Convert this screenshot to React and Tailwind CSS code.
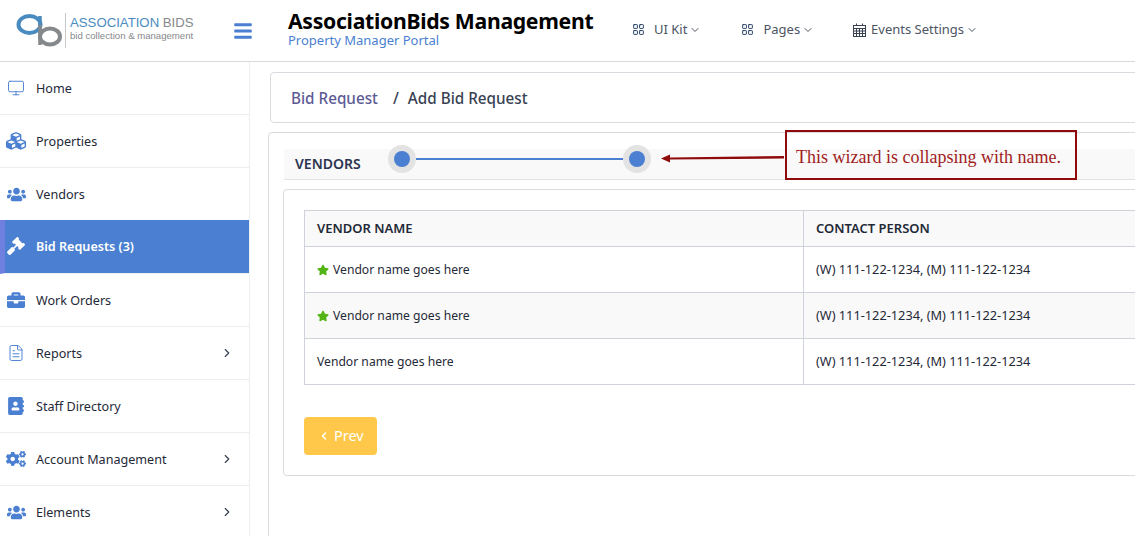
import React from 'react';
import { Monitor, ChevronRight, ChevronDown, ChevronLeft, LayoutGrid, FileText } from 'lucide-react';
import { FaBars, FaCubes, FaUsers, FaGavel, FaBriefcase, FaAddressBook, FaCogs, FaStar } from 'react-icons/fa';

const menu = [
  { label: 'Home', icon: Monitor, thin: true },
  { label: 'Properties', icon: FaCubes, size: 'w-[20px] h-[20px]' },
  { label: 'Vendors', icon: FaUsers, size: 'w-[19px] h-[19px]' },
  { label: 'Bid Requests (3)', icon: FaGavel, active: true },
  { label: 'Work Orders', icon: FaBriefcase },
  { label: 'Reports', icon: FileText, thin: true, arrow: true },
  { label: 'Staff Directory', icon: FaAddressBook },
  { label: 'Account Management', icon: FaCogs, arrow: true, size: 'w-[20px] h-[20px]' },
  { label: 'Elements', icon: FaUsers, arrow: true, size: 'w-[19px] h-[19px]' },
];

const rows = [
  { star: true, bg: 'bg-white' },
  { star: true, bg: 'bg-[#f9f9f9]' },
  { star: false, bg: 'bg-white' },
];

const Logo = () => (
  <div className="flex items-center w-[233px] pl-4 shrink-0">
    <svg width="48" height="34" viewBox="0 0 48 34" className="shrink-0">
      <ellipse cx="13.5" cy="10.5" rx="11" ry="8.5" fill="none" stroke="#4a8bbf" strokeWidth="4" />
      <path d="M24 2 V19" stroke="#4a8bbf" strokeWidth="3.5" />
      <ellipse cx="34" cy="22.5" rx="10" ry="8" fill="none" stroke="#85898c" strokeWidth="4" />
      <path d="M24 11 V31" stroke="#85898c" strokeWidth="3.5" />
    </svg>
    <div className="w-px h-[35px] bg-[#c8c8c8] ml-[1px] mr-1" />
    <div className="font-['Liberation_Sans',sans-serif] whitespace-nowrap -mt-[3px]">
      <div className="text-[13.2px] leading-[14px] text-[#4a8bbf]">ASSOCIATION <span className="text-[#85898c]">BIDS</span></div>
      <div className="text-[9.6px] leading-[12px] text-[#85898c]">bid collection &amp; management</div>
    </div>
  </div>
);

const CalendarIcon = () => (
  <svg width="13" height="14" viewBox="0 0 13 14" className="mr-[5px] text-[#374151]" fill="none" stroke="currentColor" strokeWidth="1">
    <rect x="0.5" y="2.5" width="12" height="11" />
    <path d="M3.5 0.5 V3 M9.5 0.5 V3 M0.5 5.5 H12.5 M0.5 8 H12.5 M0.5 10.5 H12.5 M3.5 5.5 V13.5 M6.5 5.5 V13.5 M9.5 5.5 V13.5" />
  </svg>
);

const NavLink = ({ label, ml, calendar }) => (
  <div className={`flex items-center text-[13px] text-[#4b5563] ${ml}`}>
    {calendar ? <CalendarIcon /> : <LayoutGrid className="w-[13px] h-[13px] text-[#1f3a5f] mr-[9px]" strokeWidth={1.75} />}
    <span>{label}</span>
    <ChevronDown className="w-3 h-3 ml-[2px]" />
  </div>
);

const App = () => {
  return (
    <div className="w-[1135px] h-[536px] overflow-hidden bg-white font-['Noto_Sans',sans-serif] text-[#1f2937]">
      {/* Header */}
      <header className="flex items-center h-[62px] border-b border-[#d9d9d9]">
        <Logo />
        <FaBars className="w-[20px] h-[20px] text-[#4a7fd1] mr-[35px]" />
        <div className="w-[330px] pb-[5px]">
          <div className="text-[21.2px] leading-[24px] font-bold text-black whitespace-nowrap tracking-[-0.3px]">AssociationBids Management</div>
          <div className="text-[13px] leading-[14px] text-[#4a7fd1]">Property Manager Portal</div>
        </div>
        <div className="flex items-center pb-[2px]">
          <NavLink label="UI Kit" ml="ml-[14px]" />
          <NavLink label="Pages" ml="ml-[40px]" />
          <NavLink label="Events Settings" ml="ml-[39px]" calendar />
        </div>
      </header>

      <div className="flex h-[474px]">
        {/* Sidebar */}
        <aside className="w-[250px] shrink-0 border-r border-[#eceef1]">
          {menu.map((item) => (
            <div
              key={item.label}
              className={`flex items-center border-b text-[12.6px] ${item.active ? 'h-[54px] -mt-px pt-[2px] bg-[#4a7fd1] text-white font-semibold border-l-[5px] border-l-[#6f7fe0] border-b-[#eeeeee]' : 'h-[53px] pt-[3px] pl-[5px] border-[#eeeeee] text-[#1f2937]'}`}
            >
              <span className="flex items-center justify-center w-[22px] mr-[9px] -mt-[3px] shrink-0">
                <item.icon
                  className={`${item.size || 'w-[18px] h-[18px]'} ${item.active ? 'text-white' : 'text-[#4a7fd1]'}`}
                  strokeWidth={item.thin ? 1.25 : undefined}
                />
              </span>
              <span>{item.label}</span>
              {item.arrow && <ChevronRight className="w-[14px] h-[14px] ml-auto mr-[15px] -mt-[3px] text-[#374151]" />}
            </div>
          ))}
        </aside>

        {/* Content */}
        <main className="flex-1 min-w-0 pt-[10px] pl-[20px] relative">
          <div className="flex items-center h-[51px] w-[900px] pl-[20px] pt-[1px] border border-[#d9dbe0] rounded-l-[4px] text-[15.25px] font-medium">
            <span className="text-[#5c5a94]">Bid Request</span>
            <span className="text-[#374151] ml-[15px]">/</span>
            <span className="text-[#374151] ml-[9px]">Add Bid Request</span>
          </div>

          <div className="w-[900px] h-[500px] -ml-[2px] mt-[9px] border border-[#d9dbe0] rounded-l-[4px] pt-[16px] pl-[15px]">
            {/* Wizard strip */}
            <div className="flex items-center h-[31px] bg-[#f9f9f9] border-b border-[#e2e2e2] pl-[11px]">
              <span className="w-[93px] text-[14px] font-semibold text-[#2c3550] -mt-[2px]">VENDORS</span>
              <div className="flex items-center -mt-[10px] h-[28px]">
                <span className="flex items-center justify-center w-[28px] h-[28px] rounded-full bg-[#e3e3e3]">
                  <span className="w-[16px] h-[16px] rounded-full bg-[#4a7fd1]" />
                </span>
                <span className="w-[207px] h-[2px] bg-[#4a7fd1]" />
                <span className="flex items-center justify-center w-[28px] h-[28px] rounded-full bg-[#e3e3e3]">
                  <span className="w-[16px] h-[16px] rounded-full bg-[#4a7fd1]" />
                </span>
              </div>
            </div>

            {/* Inner card */}
            <div className="h-[287px] mt-[9px] -ml-[1px] border border-[#d9dbe0] rounded-tl-[4px] rounded-bl-[4px] pt-[20px] pl-[20px]">
              <table className="w-[900px] table-fixed border-collapse">
                <thead>
                  <tr className="h-[36px] bg-[#f9f9f9] text-[13px] text-[#1f2937]">
                    <th className="w-[499px] border border-[#cfd2da] pl-[12px] text-left font-semibold">VENDOR NAME</th>
                    <th className="border border-[#cfd2da] pl-[12px] text-left font-semibold">CONTACT PERSON</th>
                  </tr>
                </thead>
                <tbody>
                  {rows.map((row, i) => (
                    <tr key={i} className={`h-[46px] ${row.bg}`}>
                      <td className="border border-[#cfd2da] pl-[12px] pt-[2px] text-[12.15px]">
                        <span className="flex items-center">
                          {row.star && <FaStar className="w-[12px] h-[12px] text-[#52b415] mr-1 -mt-[1px]" />}
                          Vendor name goes here
                        </span>
                      </td>
                      <td className="border border-[#cfd2da] pl-[12px] text-[12.75px]">(W) 111-122-1234, (M) 111-122-1234</td>
                    </tr>
                  ))}
                </tbody>
              </table>

              <button className="flex items-center mt-[32px] w-[73px] h-[38px] pl-[14px] bg-[#ffc84a] rounded-[4px] text-[14.5px] text-white">
                <ChevronLeft className="w-[12px] h-[12px] mr-[4px]" strokeWidth={3} />
                Prev
              </button>
            </div>
          </div>

          {/* Annotation */}
          <svg width="124" height="12" viewBox="0 0 124 12" className="absolute left-[411px] top-[90px]">
            <path d="M0 6.5 L9 2.5 V5.5 L123 4 V6.5 L9 7.5 V10.5 Z" fill="#8f0a0a" />
          </svg>
          <div className="absolute left-[535px] top-[68px] w-[292px] h-[50px] flex items-center pl-[9px] pt-[4px] border-2 border-[#8f0a0a] text-[18px] text-[#a11d1d] font-['Liberation_Serif',serif] whitespace-nowrap">
            This wizard is collapsing with name.
          </div>
        </main>
      </div>
    </div>
  );
};

export default App;
